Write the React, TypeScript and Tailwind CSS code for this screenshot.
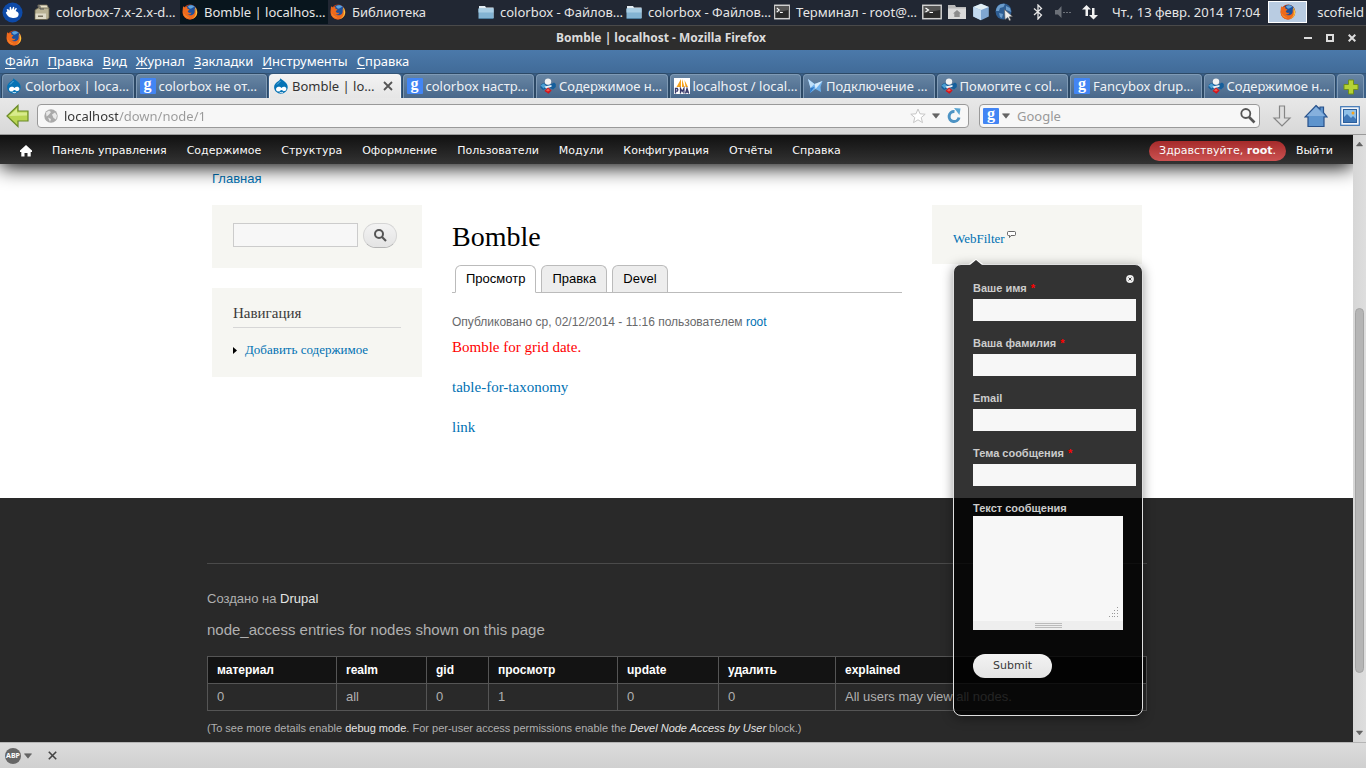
import React from 'react';

type IconProps = { className?: string };

const FirefoxIcon: React.FC<IconProps> = ({ className = 'w-4 h-4' }) => (
  <svg viewBox="0 0 16 16" className={`shrink-0 ${className}`}>
    <circle cx="8" cy="8" r="7.4" fill="#c4400f" />
    <circle cx="8.8" cy="6.4" r="5.6" fill="#1d4f9c" />
    <path d="M6 2.2C8 .8 11 1 12.6 3 11 2.6 10.4 4 9 4.6 8 5 6.4 4 6 2.2z" fill="#5fa4dc" />
    <path d="M1.200 2.200l1.500 1.400C3.400 3 4.400 2.800 5.400 3.200 5 4.200 5.600 5.200 7.400 5.300c.2.900-1.500 1.300-1.700 2.300.7 1.600 2.800 1.500 3.800.9-.4 1.800-2.600 2.300-4 1.600 1.900 2.200 6.300 1.500 7.100-1.900.3-1.400 0-2.600-.5-3.500 1.600.9 2.500 3 2.200 4.800C13.600 13 11 15.400 8 15.400S.9 12.900.7 9c-.1-2.300 0-5 .5-6.800z" fill="#ee6a1d" />
    <path d="M12.800 3.200c2 1.500 2.700 4.200 2.300 6.400-.5 2.800-2.600 4.900-5.300 5.500 2.600-1.500 4.200-3.800 4-6.600-.1-1.600-.4-3.500-1-5.300z" fill="#fbc23c" />
    <path d="M1.500 7.500c.3 3 2.500 5.600 6 6.100-3.300.5-6-2-6-6.100z" fill="#f9a13a" />
  </svg>
);

const RatIcon = () => (
  <svg viewBox="0 0 22 22" className="w-[21px] h-[21px] shrink-0">
    <circle cx="11" cy="11" r="10.5" fill="#0d4aa8" />
    <path d="M4 11l1.600-1.400L4.800 7.800l1.400-.5 1.800 1.500L8 5.500l1.300-.5.9 3.300L11.700 5l1.200.4-.3 3.100 2-2.400 1 .7-1.300 2.700c2.400.8 3.300 2.200 3.100 3.900-.3 2.400-2.800 3.500-6 3.300-3.200-.1-5.700-1.500-7.400-5.700z" fill="#fff" />
  </svg>
);

const ArchiveIcon = () => (
  <svg viewBox="0 0 16 16" className="w-4 h-4 shrink-0">
    <path d="M4 1h9l2 4H5z" fill="#e9e2c8" stroke="#77705c" strokeWidth=".8" />
    <path d="M1 6l3-2h11v10l-2 1.500H1z" fill="#b9b294" stroke="#655f4a" strokeWidth=".8" />
    <path d="M1.500 9.500h10.500v5.500H1.500z" fill="#dedac8" />
    <path d="M3 2h3v3h4" fill="none" stroke="#555" />
    <path d="M4 11.500h5v1.500H4z" fill="#77705c" />
  </svg>
);

const FolderIcon = () => (
  <svg viewBox="0 0 16 16" className="w-4 h-4 shrink-0">
    <path d="M1 2h6l1 1.500h7.500V14H1z" fill="#e3ecf2" />
    <path d="M.5 4.500h15V14h-15z" fill="#83b3d2" />
    <path d="M.5 4.500h15v4h-15z" fill="#a9cde3" />
    <path d="M.5 14h15v1h-15z" fill="#4f7f9f" />
  </svg>
);

const TerminalIcon: React.FC<IconProps> = ({ className = 'w-4 h-4' }) => (
  <svg viewBox="0 0 20 16" preserveAspectRatio="none" className={`shrink-0 ${className}`}>
    <rect x=".8" y="1.300" width="18.400" height="13.400" fill="#2b2b2b" stroke="#d0d0d0" strokeWidth="1.500" />
    <path d="M2 2h16v4L2 9z" fill="#555" />
    <path d="M3.500 4l3 2-3 2M7.500 8.500h3.500" fill="none" stroke="#fff" strokeWidth="1.200" />
  </svg>
);

const HomeFolderIcon = () => (
  <svg viewBox="0 0 20 16" className="w-[20px] h-4 shrink-0">
    <path d="M1 1h7l1 2h10v12H1z" fill="#b9b9b9" />
    <path d="M1 4.500h18V15H1z" fill="#d9d9d9" />
    <path d="M10 6l-4 3.500h1.300V13h5.400V9.500H14z" fill="#8c8c8c" />
  </svg>
);

const CubeIcon = () => (
  <svg viewBox="0 0 18 18" className="w-[18px] h-[18px] shrink-0">
    <path d="M9 .8L16.800 4v9.500L9 17.300 1.200 13.500V4z" fill="#7fa6d1" />
    <path d="M9 .8L16.800 4 9 7 1.200 4z" fill="#e3f0f5" />
    <path d="M1.200 4L9 7v10.300L1.200 13.500z" fill="#c3daf0" />
  </svg>
);

const GlobeIcon = () => (
  <svg viewBox="0 0 18 18" className="w-[18px] h-[18px] shrink-0">
    <circle cx="8.500" cy="8.500" r="8" fill="#2d5d93" />
    <path d="M3 3c2-2 5-2.500 7-2L8.500 4 5 5 4 8 1 8c0-2 1-4 2-5zM11 3l4 2 1 4-2-1-3-1zM4 10l4 1-1 4-2-1z" fill="#6b9ccb" />
    <path d="M9.500 6.500l8 7-3.300.3 1.600 3.200-1.500.7-1.500-3.200-2.800 2z" fill="#eee" stroke="#555" strokeWidth=".6" />
  </svg>
);

const BluetoothIcon = () => (
  <svg viewBox="0 0 12 16" className="w-3 h-4 shrink-0" fill="none" stroke="#e6e6e6" strokeWidth="1.300">
    <path d="M2 4.500l7.500 6.500L6 15V1l3.500 3.500L2 11" />
  </svg>
);

const VolumeIcon = () => (
  <svg viewBox="0 0 18 14" className="w-[18px] h-3.5 shrink-0">
    <path d="M1 5h3l3.500-4v12L4 9.500H1z" fill="#6b7078" />
    <path d="M9 7.500h2M12 7.500h2M15 7.500h2" stroke="#6b7078" />
  </svg>
);

const NetworkIcon = () => (
  <svg viewBox="0 0 16 16" className="w-4 h-4 shrink-0" fill="#f2f2f2">
    <path d="M4.500 1L9 5.500H6V12H3.500V5.500H0z" />
    <path d="M11.500 15.500L7 11h3V4h2.500v7H16z" />
  </svg>
);

const DrupalIcon = () => (
  <svg viewBox="0 0 16 16" className="w-4 h-4 shrink-0">
    <path d="M7.500.3c.8 1.300 2.300 1.900 4 3.200 2 1.500 3.200 3.400 3.200 5.600 0 4-3.200 6.600-6.800 6.600S1.100 13 1.100 9.300c0-2.400 1.400-4 3-5.200C5.700 3 7 2.300 7.500.3z" fill="#0673b5" />
    <path d="M3.200 10.200c1.600-2 4.200-1.600 5.200-.3 1.400-1.200 3.700-1.700 4.800.2.6 1.600-.3 3.200-1.900 3-1.300-.1-2-1.200-2.900-1.200-.8 0-1.500 1.500-3 1.500-2 0-2.700-1.600-2.200-3.200z" fill="#fff" />
    <path d="M6.500 14c1 .9 2.800.9 3.700 0" stroke="#fff" fill="none" />
    <path d="M4 6.500C5 5 6.500 4.500 7.500 3" stroke="#6ab5e0" fill="none" />
  </svg>
);

const GoogleIcon = () => (
  <span className="w-4 h-4 shrink-0 rounded-[1px] bg-[#4285f4] text-white text-[16px] leading-[11px] font-bold text-center font-['Liberation_Serif',serif]">g</span>
);

const DruIcon = () => (
  <svg viewBox="0 0 16 16" className="w-4 h-4 shrink-0">
    <path d="M1 6.500l2.500-1.500 3 1.500h4L14 4.500l1.800 1.500v3L13 11.500 9.500 9.500 6 10.500 3 12 .3 9.500z" fill="#155f9c" />
    <path d="M.5 7.500L3.500 5.500 6.500 8 3.500 10.500z" fill="#4da0d4" />
    <path d="M4.500 8.500l7-1.500v1.800L6 10.500z" fill="#e8f2f9" />
    <circle cx="8" cy="3.600" r="3.200" fill="#f3f3f3" />
    <path d="M8 9.500l3.600 3L8.500 15.700 4.500 13z" fill="#d7141a" />
    <path d="M8 10.500l2 1.700L8 13.500l-2-1z" fill="#ef5a50" />
  </svg>
);

const PmaIcon = () => (
  <svg viewBox="0 0 16 16" className="w-4 h-4 shrink-0">
    <path d="M0 0h16v16H0z" fill="#fff" />
    <path d="M7 1v8H2.500zM8 1l2.500 8H8zM10.500 2L14 9h-2.500z" fill="#f6a21c" />
    <path d="M1.500 15.500v-5h1.800q1.200 1.500 0 2.700H1.500M6.500 15.500v-5l1.700 3 1.700-3v5M11.500 15.500l1.500-5 1.700 5M12 14h2" fill="none" stroke="#3a3a6a" strokeWidth="1.300" />
  </svg>
);

const ButterflyIcon = () => (
  <svg viewBox="0 0 16 16" className="w-4 h-4 shrink-0">
    <path d="M1 1l6.500 5L15.500 3l-2 6 .5 5-5.500-3L3 15l.5-5z" fill="#6fb1ec" />
    <path d="M1 1l6.500 5-4 4z" fill="#bfe0fa" />
    <path d="M15.500 3L8.500 11l-1-5z" fill="#d6ebfb" />
    <path d="M3.500 10l4-1L3 15z" fill="#2f78c8" />
  </svg>
);

const Caret: React.FC<IconProps> = ({ className = 'w-2 h-1.5' }) => (
  <svg viewBox="0 0 9 6" className={`shrink-0 ${className}`}>
    <path d="M.5.5h8L4.500 5.500z" fill="#666" stroke="#555" strokeWidth=".6" />
  </svg>
);

const tasks = [
  { icon: <ArchiveIcon />, title: 'colorbox-7.x-2.x-d…' },
  { icon: <FirefoxIcon />, title: 'Bomble | localhos…', active: true },
  { icon: <FirefoxIcon />, title: 'Библиотека' },
  { icon: <FolderIcon />, title: 'colorbox - Файлов…' },
  { icon: <FolderIcon />, title: 'colorbox - Файлов…' },
  { icon: <TerminalIcon />, title: 'Терминал - root@…' },
];

const menus = ['Файл', 'Правка', 'Вид', 'Журнал', 'Закладки', 'Инструменты', 'Справка'];

const tabs = [
  { icon: <DrupalIcon />, title: 'Colorbox | loca…' },
  { icon: <GoogleIcon />, title: 'colorbox не от…' },
  { icon: <DrupalIcon />, title: 'Bomble | lo…', active: true },
  { icon: <GoogleIcon />, title: 'colorbox настр…' },
  { icon: <DruIcon />, title: 'Содержимое н…' },
  { icon: <PmaIcon />, title: 'localhost / local…' },
  { icon: <ButterflyIcon />, title: 'Подключение …' },
  { icon: <DruIcon />, title: 'Помогите с col…' },
  { icon: <GoogleIcon />, title: 'Fancybox drup…' },
  { icon: <DruIcon />, title: 'Содержимое н…' },
];

const adminLinks = ['Панель управления', 'Содержимое', 'Структура', 'Оформление', 'Пользователи', 'Модули', 'Конфигурация', 'Отчёты', 'Справка'];

const fields = [
  { id: 'name', label: 'Ваше имя', required: true },
  { id: 'surname', label: 'Ваша фамилия', required: true },
  { id: 'email', label: 'Email', required: false },
  { id: 'subject', label: 'Тема сообщения', required: true },
];

const accessTable = [
  { head: 'материал', value: '0', width: 'w-[129px]' },
  { head: 'realm', value: 'all', width: 'w-[90px]' },
  { head: 'gid', value: '0', width: 'w-[62px]' },
  { head: 'просмотр', value: '1', width: 'w-[129px]' },
  { head: 'update', value: '0', width: 'w-[101px]' },
  { head: 'удалить', value: '0', width: 'w-[117px]' },
  { head: 'explained', value: 'All users may view all nodes.', width: '' },
];

const DesktopPanel = () => (
  <div className="h-[25px] pb-px flex items-center bg-[#212733] text-[#e6e6e6] text-[13px] leading-4 whitespace-nowrap">
    <button aria-label="Меню" className="w-8 shrink-0 pl-0.5"><RatIcon /></button>
    {tasks.map((task, i) => (
      <button
        key={i}
        className={`w-[148px] shrink-0 h-6 pl-0.5 flex items-center gap-1.5 ${task.active ? 'bg-[#08151d]' : ''}`}
      >
        {task.icon}
        {task.title}
      </button>
    ))}
    <div className="flex-1 pl-0.5 flex items-center gap-[5px]">
      <TerminalIcon className="w-[20px] h-4" />
      <HomeFolderIcon />
      <CubeIcon />
      <GlobeIcon />
    </div>
    <div className="flex items-center gap-2.5">
      <BluetoothIcon />
      <VolumeIcon />
      <NetworkIcon />
      <span className="pl-1">Чт., 13 февр. 2014 17:04</span>
    </div>
    <div className="ml-2 w-[39px] h-[22px] flex items-center justify-center bg-[#b9cce2] border border-white">
      <FirefoxIcon />
    </div>
    <span className="pl-2.5 pr-0.5">scofield</span>
  </div>
);

const TitleBar = () => (
  <div className="h-[25px] flex items-center px-1.5 bg-[#2d2d2d] border-t border-[#4a4a4a] text-[#dcdcdc]">
    <FirefoxIcon />
    <div className="flex-1 text-center text-[12px] leading-4 font-bold">Bomble | localhost - Mozilla Firefox</div>
    <div className="w-[60px] flex items-center justify-end gap-3.5 pr-1">
      <button aria-label="Свернуть" className="w-2 h-0.5 bg-[#dcdcdc]" />
      <button aria-label="Развернуть" className="w-2 h-2 border-2 border-[#dcdcdc]" />
      <button aria-label="Закрыть">
        <svg viewBox="0 0 8 8" className="w-2 h-2" stroke="#dcdcdc" strokeWidth="2"><path d="M.7.7l6.600 6.600M7.300.7L.7 7.300" /></svg>
      </button>
    </div>
  </div>
);

const TabStrip = () => (
  <div className="h-[25px] flex items-end gap-0.5 px-0.5 bg-[#3b5f86] border-t border-[#335577] text-[13px] leading-4">
    {tabs.map((tab, i) => (
      <button
        key={i}
        className={`flex-1 min-w-0 h-6 px-[3px] pb-px flex items-center gap-[3px] whitespace-nowrap rounded-t-[4px] border border-b-0 ${
          tab.active
            ? 'bg-linear-to-b from-[#f2f2f2] to-[#e6e6e6] border-[#f5f5f5] text-[#333]'
            : 'bg-linear-to-b from-[#6785a3] to-[#48678a] border-[#7f9ab5] text-[#eef2f6] shadow-[0_0_0_1px_#2c4966]'
        }`}
      >
        {tab.icon}
        <span className="flex-1 text-left">{tab.title}</span>
        {tab.active && (
          <svg viewBox="0 0 10 10" className="w-2.5 h-2.5 mr-1 shrink-0" stroke="#555" strokeWidth="1.800"><path d="M1 1l8 8M9 1L1 9" /></svg>
        )}
      </button>
    ))}
    <button aria-label="Новая вкладка" className="w-[27px] h-6 flex items-center justify-center rounded-t-[4px] border border-b-0 border-[#7f9ab5] bg-linear-to-b from-[#6785a3] to-[#48678a]">
      <svg viewBox="0 0 16 16" className="w-4 h-4"><path d="M5.500 1h5v4.500H15v5h-4.500V15h-5v-4.500H1v-5h4.500z" fill="#b5d334" stroke="#6f8f1a" /></svg>
    </button>
  </div>
);

const NavBar = () => (
  <div className="h-[37px] flex items-center px-1.5 bg-linear-to-b from-[#e8e8e8] to-[#d8d8d8] border-b border-[#999] text-[13px]">
    <button aria-label="Назад">
      <svg viewBox="0 0 24 24" className="w-6 h-6"><path d="M1 12L12 1.500V7h10v10H12v5.500z" fill="#b9d552" stroke="#6a8a2a" strokeWidth="1.200" /><path d="M3 12l8-7.500V8.500h10v3z" fill="#d8eb8c" /></svg>
    </button>
    <div className="flex-1 ml-[7px] h-6 flex items-center px-1.5 gap-1 bg-[#f7f7f7] border border-[#999] rounded-[4px]">
      <svg viewBox="0 0 14 14" className="w-3.5 h-3.5 shrink-0">
        <circle cx="7" cy="7" r="6.700" fill="#a9a9a9" />
        <path d="M2 3.500l3-2 2 1.500L5.500 5 4 6.500l-1.500 1zM8 5.500l3-2 2 3-1 4-2.500-1.500zM4 8.500L7 10l-1 3z" fill="#e8e8e8" />
      </svg>
      <input
        aria-label="Адрес"
        defaultValue="localhost/down/node/1"
        className="flex-1 min-w-0 ml-0.5 h-5 outline-none text-transparent bg-clip-text bg-[linear-gradient(90deg,#333_54px,#999_54px)]"
      />
      <svg viewBox="0 0 16 16" className="w-4 h-4 shrink-0" fill="#fff" stroke="#c6c6c6"><path d="M8 1l2 4.800 5.200.4-4 3.400 1.300 5L8 11.800l-4.500 2.800 1.300-5-4-3.400L6 5.800z" /></svg>
      <Caret className="w-2 h-1.5 mx-0.5" />
      <svg viewBox="0 0 16 16" className="w-4 h-4 shrink-0"><path d="M8.500 3.500A5 5 0 1 0 13 9.500" fill="none" stroke="#4d93c4" strokeWidth="3" /><path d="M8 0l6.500.5L13.500 7z" fill="#5aa5d2" /></svg>
    </div>
    <div className="ml-2.5 w-[281px] h-6 flex items-center px-[3px] gap-[3px] bg-[#f7f7f7] border border-[#999] rounded-[4px]">
      <GoogleIcon />
      <Caret />
      <input aria-label="Поиск" placeholder="Google" className="flex-1 min-w-0 ml-1 h-5 outline-none placeholder:text-[#999]" />
      <svg viewBox="0 0 16 16" className="w-4 h-4 shrink-0" fill="none" stroke="#555"><circle cx="5.800" cy="5.500" r="4.500" strokeWidth="1.800" /><path d="M9 9l5.500 5.500" strokeWidth="2.600" /></svg>
    </div>
    <button aria-label="Загрузки" className="ml-3">
      <svg viewBox="0 0 20 22" className="w-5 h-[22px]"><path d="M7.500 1h5v12H18l-8 8-8-8h5.500z" fill="#dedede" stroke="#858585" strokeWidth="1.200" /></svg>
    </button>
    <button aria-label="Домой" className="ml-3">
      <svg viewBox="0 0 24 24" className="w-6 h-6"><path d="M12 1.500l4 3.700V3h3.500v5.500L23 13h-3v9.500H4V13H1z" fill="#5e94cd" stroke="#28518a" strokeWidth="1.200" /><path d="M12 3l9 9H3z" fill="#85b0dd" /></svg>
    </button>
    <button aria-label="Изображения" className="ml-3">
      <svg viewBox="0 0 20 20" className="w-5 h-5">
        <rect x=".7" y=".7" width="18.600" height="18.600" fill="#f2f5f9" stroke="#3c74b4" strokeWidth="1.200" />
        <rect x="3.500" y="3.500" width="13" height="13" fill="#8fc0e8" stroke="#2b5e9c" />
        <path d="M4 16v-5l3-3 4 4 2-2 3 3v3z" fill="#3f78b8" />
        <circle cx="13" cy="7" r="1.500" fill="#f6a21c" />
      </svg>
    </button>
  </div>
);

const AdminToolbar = () => (
  <div className="relative z-10 h-[29px] pt-0.5 flex items-center px-[10px] bg-linear-to-b from-[#111] to-[#333] shadow-[0_3px_20px_#000] font-['DejaVu_Sans',sans-serif] text-[11px] leading-5 text-[#fafafa]">
    <a href="#" aria-label="Главная" className="px-[10px]">
      <svg viewBox="0 0 12 12" className="w-3 h-3" fill="#fff"><path d="M6 0l6 5.500V7h-1.300v4.500H7.500V8h-3v3.500H1.300V7H0V5.500z" /></svg>
    </a>
    <nav className="flex flex-1">
      {adminLinks.map((link) => (
        <a key={link} href="#" className="px-[10px]">{link}</a>
      ))}
    </nav>
    <a href="#" className="px-[10px] rounded-[10px] bg-linear-to-b from-[#a52a2a] to-[#cc5252]">
      Здравствуйте, <strong>root</strong>.
    </a>
    <a href="#" className="px-[10px]">Выйти</a>
  </div>
);

const ContactPopup = () => (
  <div className="absolute z-20 top-[59px] left-[21px] w-[190px] rounded-[8px] border border-[#e0e0e0] bg-black/80 pt-[15px] pb-[37px] pl-[19px] shadow-[0_2px_12px_rgba(0,0,0,0.4)] font-['Liberation_Sans',sans-serif] text-[11px] leading-4 text-[#ccc]">
    <svg viewBox="0 0 14 6" className="absolute -top-1.5 left-[15px] w-3.5 h-1.5">
      <path d="M0 5L7 0l7 5z" fill="#fff" />
      <path d="M1 6l6-5 6 5z" fill="#333" />
    </svg>
    <button aria-label="Закрыть" className="absolute top-2.5 right-2">
      <svg viewBox="0 0 8 8" className="w-2 h-2"><circle cx="4" cy="4" r="3.900" fill="#eee" /><path d="M2.500 2.500l3 3M5.500 2.500l-3 3" stroke="#444" /></svg>
    </button>
    <form className="flex flex-col items-start">
      {fields.map((field) => (
        <div key={field.id} className="mb-[14px]">
          <label htmlFor={field.id} className="block mb-[3px] font-bold">
            {field.label} {field.required && <span className="pl-px text-[#f00]">*</span>}
          </label>
          <input id={field.id} className="block w-[163px] h-[22px] bg-[#f7f7f7]" />
        </div>
      ))}
      <label htmlFor="message" className="font-bold">Текст сообщения</label>
      <div className="relative w-[150px] mb-6">
        <textarea id="message" className="block w-full h-[105px] resize-none bg-[#f7f7f7]" />
        <svg viewBox="0 0 10 10" className="absolute right-1 bottom-[13px] w-2.5 h-2.5" fill="#999">
          <path d="M8 0h1v1H8zM8 3h1v1H8zM5 3h1v1H5zM8 6h1v1H8zM5 6h1v1H5zM3 6h1v1H3zM8 9h1v1H8zM5 9h1v1H5zM3 9h1v1H3zM0 9h1v1H0z" />
        </svg>
        <div className="h-[9px] flex flex-col items-center justify-center gap-px bg-[#eee]">
          <i className="w-[27px] h-px bg-[#bbb]" />
          <i className="w-[27px] h-px bg-[#bbb]" />
          <i className="w-[27px] h-px bg-[#bbb]" />
        </div>
      </div>
      <button type="button" className="h-6 px-5 rounded-full bg-linear-to-b from-[#f3f3f3] to-[#e4e4e4] text-[#3a3a3a] font-['DejaVu_Sans',sans-serif]">Submit</button>
    </form>
  </div>
);

const MainArea = () => (
  <div className="pl-px">
    <div className="w-full max-w-[940px] mx-auto h-[334px] px-[5px] font-['Liberation_Serif',serif]">
      <a href="#" className="inline-block pt-[5px] font-['Liberation_Sans',sans-serif] text-[13px] leading-5 text-[#0071b3]">Главная</a>
      <div className="mt-[15px] grid grid-cols-[210px_1fr_210px] gap-[30px] items-start">
        <aside className="flex flex-col gap-5">
          <form className="h-[63px] flex items-start gap-[5px] pl-[21px] pt-[18px] bg-[#f6f6f2]">
            <input aria-label="Поиск по сайту" className="w-[125px] h-6 bg-[#f7f7f7] border border-[#ccc]" />
            <button type="button" aria-label="Искать" className="w-[34px] h-[25px] flex items-center justify-center rounded-full border border-[#d5d5d5] border-b-[#b4b4b4] bg-linear-to-b from-[#f3f3f3] to-[#e4e4e4]">
              <svg viewBox="0 0 13 13" className="w-[13px] h-[13px]" fill="none" stroke="#555"><circle cx="5" cy="5" r="4" strokeWidth="2" /><path d="M8 8l4 4" strokeWidth="2.200" /></svg>
            </button>
          </form>
          <div className="h-[89px] px-[21px] pt-[15px] bg-[#f6f6f2]">
            <h2 className="pb-[4px] border-b border-[#d6d6d6] text-[15px] leading-5 text-[#3b3b3b]">Навигация</h2>
            <a href="#" className="mt-3 flex items-center gap-2 text-[13px] leading-5 text-[#0071b3]">
              <svg viewBox="0 0 4 7" className="w-1 h-[7px]"><path d="M0 0l4 3.500L0 7z" fill="#000" /></svg>
              Добавить содержимое
            </a>
          </div>
        </aside>
        <main className="pt-[14px] text-[15px] leading-5">
          <h1 className="text-[28px] leading-9 text-black">Bomble</h1>
          <nav className="mt-[10px] px-[3px] flex items-end gap-[5px] border-b border-[#bbb] font-['Liberation_Sans',sans-serif] text-[13px] text-black">
            <a href="#" className="-mb-px h-7 px-[10px] pt-[3px] rounded-t-[6px] border border-[#bbb] border-b-white bg-white">Просмотр</a>
            <a href="#" className="h-[27px] px-[10px] pt-[3px] rounded-t-[6px] border border-b-0 border-[#bbb] bg-[#ededed]">Правка</a>
            <a href="#" className="h-[27px] px-[10px] pt-[3px] rounded-t-[6px] border border-b-0 border-[#bbb] bg-[#ededed]">Devel</a>
          </nav>
          <p className="mt-[19px] font-['Liberation_Sans',sans-serif] text-[12px] text-[#68696b]">
            Опубликовано ср, 02/12/2014 - 11:16 пользователем <a href="#" className="text-[#0071b3]">root</a>
          </p>
          <p className="mt-[5px] mb-5 text-[#f00]">Bomble for grid date.</p>
          <p className="mb-5"><a href="#" className="text-[#0071b3]">table-for-taxonomy</a></p>
          <p><a href="#" className="text-[#0071b3]">link</a></p>
        </main>
        <aside className="relative h-[59px] pl-[21px] pt-6 bg-[#f6f6f2]">
          <a href="#" className="flex gap-0.5 text-[13px] leading-5 text-[#0071b3]">
            WebFilter
            <svg viewBox="0 0 9 7" className="w-[9px] h-[7px] mt-0.5"><path d="M1.500.5h6q1 0 1 1v2q0 1-1 1H4L2.500 6.500V4.500h-1q-1 0-1-1v-2q0-1 1-1z" fill="#fff" stroke="#444" strokeWidth=".8" /></svg>
          </a>
          <ContactPopup />
        </aside>
      </div>
    </div>
  </div>
);

const Footer = () => (
  <footer className="flex-1 bg-[#292929] pl-px pt-[65px] font-['Liberation_Sans',sans-serif] text-[#b0b0b0]">
    <div className="w-full max-w-[940px] mx-auto border-t border-[#4a4a4a] pt-[25px]">
      <p className="text-[13px] leading-5">Создано на <a href="#" className="text-[#e4e4e4]">Drupal</a></p>
      <h3 className="mt-[11px] text-[15px] leading-5">node_access entries for nodes shown on this page</h3>
      <table className="mt-4 w-full table-fixed border-collapse text-[13px] leading-[18px] text-left">
        <thead>
          <tr className="bg-[#131313] text-white text-[12px]">
            {accessTable.map((col) => (
              <th key={col.head} className={`h-[27px] px-[9px] border border-[#555] ${col.width}`}>{col.head}</th>
            ))}
          </tr>
        </thead>
        <tbody>
          <tr>
            {accessTable.map((col) => (
              <td key={col.head} className="h-[27px] px-[9px] border border-[#555]">{col.value}</td>
            ))}
          </tr>
        </tbody>
      </table>
      <p className="mt-[7px] text-[11px] leading-5">
        (To see more details enable <a href="#" className="text-[#e4e4e4]">debug mode</a>. For per-user access permissions enable the <a href="#" className="text-[#e4e4e4]"><em>Devel Node Access by User</em></a> block.)
      </p>
    </div>
  </footer>
);

const Scrollbar = () => (
  <div className="w-[13px] flex flex-col items-center py-1.5 bg-linear-to-r from-[#d6d6d6] to-[#dedede]">
    <Caret className="w-[7px] h-1.5 rotate-180" />
    <div className="flex-[162]" />
    <div className="flex-[364] w-[9px] rounded-full border border-[#a4a4a4] bg-[#b5b5b5]" />
    <div className="flex-[57]" />
    <Caret className="w-[7px] h-1.5" />
  </div>
);

export default function App() {
  return (
    <div className="h-screen flex flex-col overflow-hidden font-['Noto_Sans',sans-serif]">
      <DesktopPanel />
      <TitleBar />
      <div className="h-[23px] pb-px px-[5px] flex items-center gap-[9px] bg-linear-to-b from-[#4b79aa] to-[#416b98] text-white text-[13px] leading-4">
        {menus.map((menu) => (
          <button key={menu}><u className="underline-offset-2">{menu[0]}</u>{menu.slice(1)}</button>
        ))}
      </div>
      <TabStrip />
      <NavBar />
      <div className="flex-1 min-h-0 flex">
        <div className="flex-1 min-w-0 flex flex-col overflow-hidden bg-white">
          <AdminToolbar />
          <MainArea />
          <Footer />
        </div>
        <Scrollbar />
      </div>
      <div className="h-[26px] flex items-center pl-[5px] bg-linear-to-b from-[#dcdcdc] to-[#d0d0d0] border-t border-[#b5b5b5]">
        <button aria-label="Adblock" className="flex items-center gap-[3px]">
          <span className="w-4 h-4 rounded-full bg-[#666] text-white text-[7px] leading-4 font-bold text-center">ABP</span>
          <Caret />
        </button>
        <button aria-label="Закрыть панель" className="ml-4">
          <svg viewBox="0 0 8 8" className="w-[9px] h-[9px]" stroke="#444" strokeWidth="1.400"><path d="M.7.7l6.600 6.600M7.300.7L.7 7.300" /></svg>
        </button>
      </div>
    </div>
  );
}
